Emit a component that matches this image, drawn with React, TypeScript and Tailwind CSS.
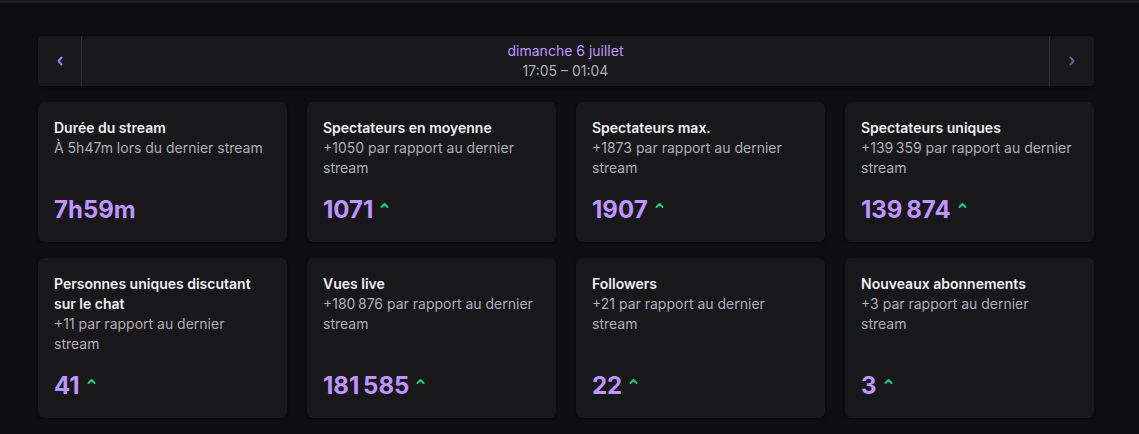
import React from 'react';

type Stat = {
  title: string;
  subtitle: string;
  value: string;
  up?: boolean;
};

const stats: Stat[] = [
  { title: 'Durée du stream', subtitle: 'À 5h47m lors du dernier stream', value: '7h59m' },
  { title: 'Spectateurs en moyenne', subtitle: '+1050 par rapport au dernier stream', value: '1071', up: true },
  { title: 'Spectateurs max.', subtitle: '+1873 par rapport au dernier stream', value: '1907', up: true },
  { title: 'Spectateurs uniques', subtitle: '+139\u202F359 par rapport au dernier stream', value: '139\u202F874', up: true },
  { title: 'Personnes uniques discutant sur le chat', subtitle: '+11 par rapport au dernier stream', value: '41', up: true },
  { title: 'Vues live', subtitle: '+180\u202F876 par rapport au dernier stream', value: '181\u202F585', up: true },
  { title: 'Followers', subtitle: '+21 par rapport au dernier stream', value: '22', up: true },
  { title: 'Nouveaux abonnements', subtitle: '+3 par rapport au dernier stream', value: '3', up: true },
];

const Chevron = ({ dir, className }: { dir: 'left' | 'right'; className: string }) => (
  <svg width="8" height="10" viewBox="0 0 8 10" className={className}>
    <path
      d={dir === 'left' ? 'M5.5 1.5 L2.5 5 L5.5 8.5' : 'M2.5 1.5 L5.5 5 L2.5 8.5'}
      fill="none"
      stroke="currentColor"
      strokeWidth="2"
      strokeLinecap="round"
      strokeLinejoin="round"
    />
  </svg>
);

const UpArrow = () => (
  <svg width="9" height="7" viewBox="0 0 9 7" className="text-[#00db84] mb-[10px]">
    <path d="M1.5 5 L4.5 2 L7.5 5" fill="none" stroke="currentColor" strokeWidth="2" strokeLinecap="round" strokeLinejoin="round" />
  </svg>
);

const StatCard = ({ stat }: { stat: Stat }) => (
  <div className="flex flex-col rounded-md bg-[#18181b] py-4 pl-4 pr-5 shadow-[0_1px_3px_rgba(0,0,0,0.6)]">
    <div className="text-sm font-semibold leading-5 text-[#efeff1]">{stat.title}</div>
    <div className="text-sm leading-5 text-[#adadb8]">{stat.subtitle}</div>
    <div className="mt-auto flex items-center gap-[7px] pt-4">
      <span className="text-2xl font-bold leading-8 text-[#bf94ff]">{stat.value}</span>
      {stat.up && <UpArrow />}
    </div>
  </div>
);

const App = () => {
  return (
    <div className="min-h-screen bg-[#0e0e10]" style={{ fontFamily: 'Inter, "Noto Sans", sans-serif' }}>
      <div className="h-[3px] bg-[#1f1f23]" />
      <div className="ml-[38px] w-[1056px] pt-[33px]">
        <div className="flex h-[50px] rounded-sm bg-[#18181b] shadow-[0_1px_3px_rgba(0,0,0,0.6)]">
          <button className="flex w-[44px] items-center justify-center border-r border-[#2f2f35]">
            <Chevron dir="left" className="text-[#a970ff]" />
          </button>
          <div className="flex flex-1 flex-col items-center justify-center">
            <span className="text-sm leading-5 text-[#bf94ff]">dimanche 6 juillet</span>
            <span className="text-sm leading-5 text-[#adadb8]">17:05 – 01:04</span>
          </div>
          <button className="flex w-[45px] items-center justify-center border-l border-[#2f2f35]">
            <Chevron dir="right" className="text-[#6e5a9c]" />
          </button>
        </div>
        <div className="mt-4 grid grid-cols-4 gap-x-5 gap-y-4">
          {stats.map((s) => (
            <StatCard key={s.title} stat={s} />
          ))}
        </div>
      </div>
    </div>
  );
};

export default App;
